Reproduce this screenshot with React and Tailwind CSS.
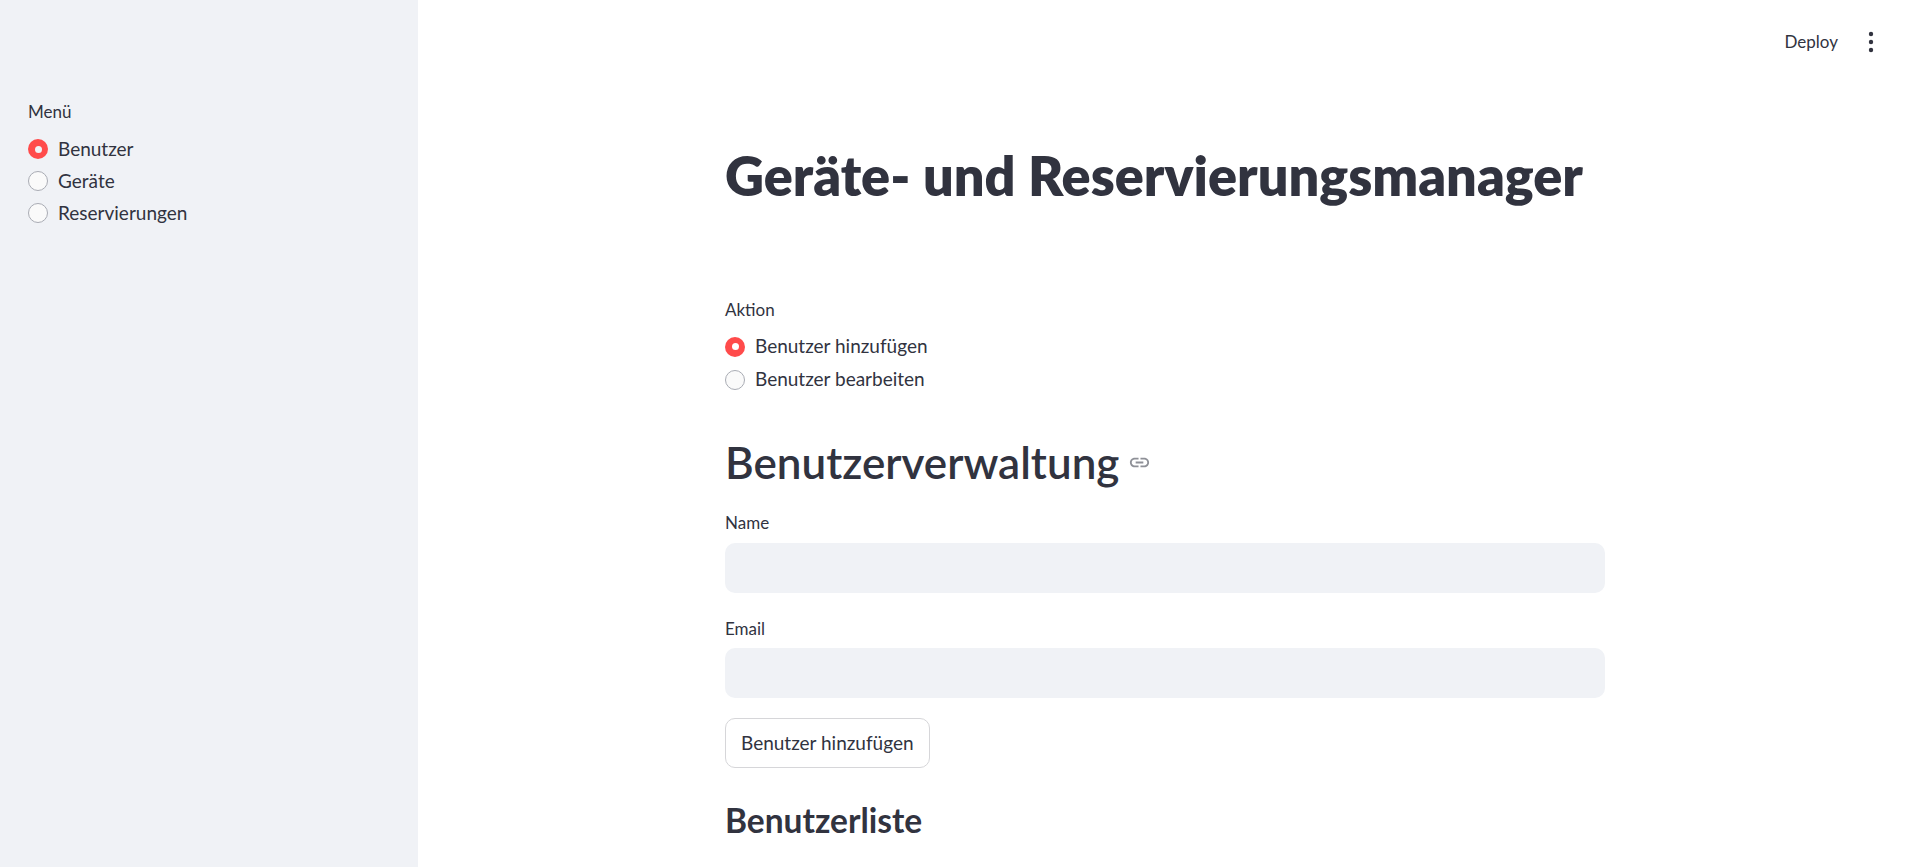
import React from "react";

const Radio = ({ checked, label, inner, rowClass }) => (
  <label className={`flex items-center gap-[10px] text-[19px] text-[#31333f] cursor-pointer ${rowClass}`}>
    {checked ? (
      <span className="flex h-5 w-5 shrink-0 items-center justify-center rounded-full bg-[#ff4b4b]">
        <span className={`h-[7px] w-[7px] rounded-full ${inner}`} />
      </span>
    ) : (
      <span className="h-5 w-5 shrink-0 rounded-full border border-[#a9acb4] bg-[#fafafa]" />
    )}
    <span>{label}</span>
  </label>
);

const LinkIcon = () => (
  <svg viewBox="0 0 24 24" className="ml-[9px] h-[23px] w-[23px] fill-[#8e9097]">
    <path d="M3.9 12c0-1.71 1.39-3.1 3.1-3.1h4V7H7c-2.76 0-5 2.24-5 5s2.24 5 5 5h4v-1.9H7c-1.71 0-3.1-1.39-3.1-3.1zM8 13h8v-2H8v2zm9-6h-4v1.9h4c1.71 0 3.1 1.39 3.1 3.1s-1.39 3.1-3.1 3.1h-4V17h4c2.76 0 5-2.24 5-5s-2.24-5-5-5z" />
  </svg>
);

export default function App() {
  const menu = ["Benutzer", "Geräte", "Reservierungen"];
  const actions = ["Benutzer hinzufügen", "Benutzer bearbeiten"];

  return (
    <div className="flex h-[867px] w-full overflow-hidden bg-white font-[Lato,'Liberation_Sans',sans-serif] text-[#31333f]">
      {/* sidebar */}
      <aside className="w-[418px] shrink-0 bg-[#f0f2f6] px-[28px] pt-[100px]">
        <p className="text-[17px] leading-[24px]">Menü</p>
        <div className="mt-[9px] flex flex-col">
          {menu.map((m, i) => (
            <Radio key={m} label={m} checked={i === 0} inner="bg-[#f0f2f6]" rowClass="h-[32px]" />
          ))}
        </div>
      </aside>

      {/* main */}
      <main className="flex flex-1 flex-col">
        <header className="flex h-[84px] items-center justify-end gap-[30px] pr-[33px]">
          <button className="text-[17px] text-[#31333f]">Deploy</button>
          <svg viewBox="0 0 6 22" className="h-[22px] w-[6px] fill-[#31333f]">
            <circle cx="3" cy="3" r="2.2" />
            <circle cx="3" cy="11" r="2.2" />
            <circle cx="3" cy="19" r="2.2" />
          </svg>
        </header>

        <div className="ml-[307px] w-[880px]">
          <h1 className="mt-[59px] text-[54px] font-extrabold leading-[66px] text-[#31333f]">
            Geräte- und Reservierungsmanager
          </h1>

          <p className="mt-[89px] text-[17px] leading-[24px]">Aktion</p>
          <div className="mt-[8px] flex flex-col">
            {actions.map((a, i) => (
              <Radio key={a} label={a} checked={i === 0} inner="bg-white" rowClass="h-[33px]" />
            ))}
          </div>

          <h2 className="mt-[39px] flex h-[54px] items-center text-[44px] font-semibold">
            Benutzerverwaltung
            <LinkIcon />
          </h2>

          <p className="mt-[22px] text-[17px] leading-[24px]">Name</p>
          <input className="mt-[8px] block h-[50px] w-full rounded-[10px] bg-[#f0f2f6] px-4 text-[19px] outline-none" />

          <p className="mt-[24px] text-[17px] leading-[24px]">Email</p>
          <input className="mt-[7px] block h-[50px] w-full rounded-[10px] bg-[#f0f2f6] px-4 text-[19px] outline-none" />

          <button className="mt-[20px] h-[50px] rounded-[10px] border border-[#d6d6d9] bg-white px-[15px] text-[19px] text-[#31333f]">
            Benutzer hinzufügen
          </button>

          <h3 className="mt-[32px] text-[33.5px] font-bold leading-[40px]">Benutzerliste</h3>
        </div>
      </main>
    </div>
  );
}
